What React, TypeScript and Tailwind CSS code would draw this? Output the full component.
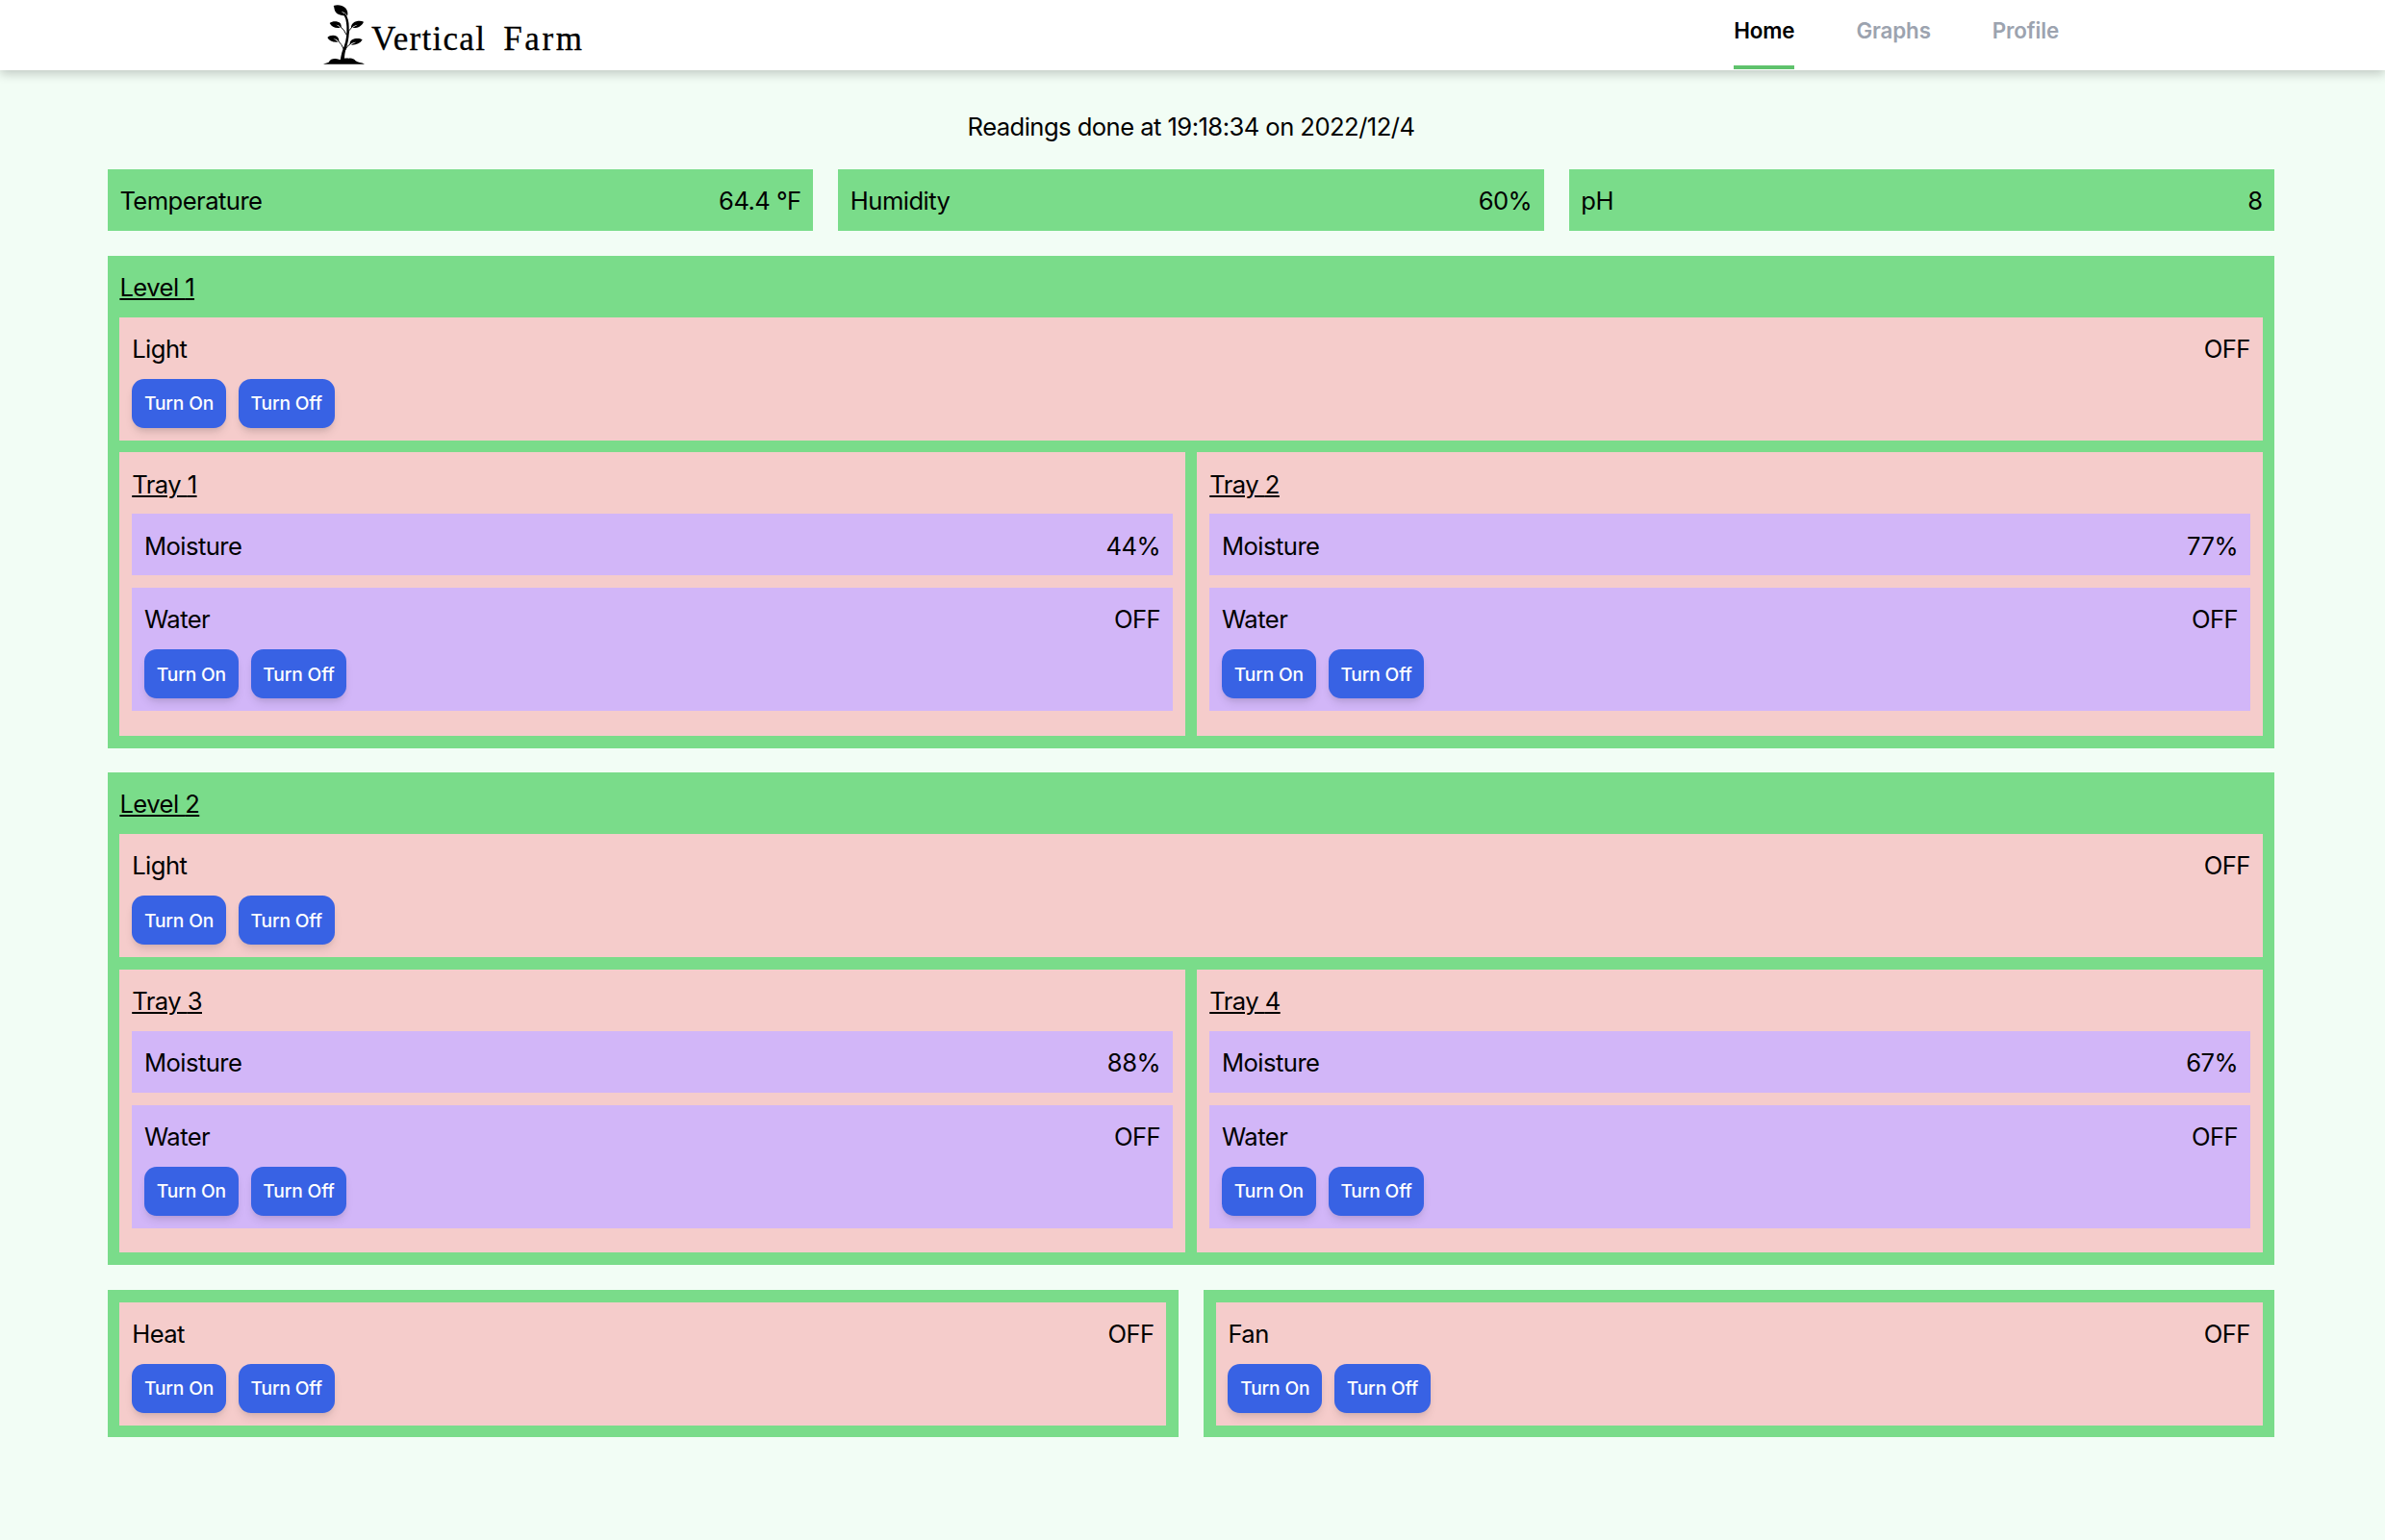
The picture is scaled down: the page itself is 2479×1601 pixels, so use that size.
import React from "react";

function Logo() {
  return (
    <svg className="mt-[5px] h-[62px] w-[43px] shrink-0" viewBox="48 15 129 186" fill="#000">
      <path d="M48 200 C52 197 60 197 65 194 C69 186 76 183 84 183 C92 182 97 187 104 186 C112 182 120 181 128 182 C138 181 144 184 149 190 C155 195 168 195 177 200 Z" />
      <path d="M101 188 C104 170 107 158 113 144 C120 125 122 106 121 82 C120 66 118 54 110 44 L116 42 C125 54 128 68 128 84 C129 106 128 124 121 146 C115 162 114 174 114 188 Z" />
      <path d="M80 18 C92 13 108 16 117 25 C123 32 126 40 123 50 C119 42 112 37 104 36 C110 40 115 43 118 48 C104 50 92 46 86 37 C82 31 83 24 80 18 Z" />
      <path d="M68 72 C76 65 90 65 98 70 C103 74 105 80 104 86 C99 80 94 77 87 77 C93 79 97 82 101 86 C88 90 74 84 68 72 Z" />
      <path d="M174 68 C166 64 150 65 142 71 C136 76 134 82 135 87 C141 82 147 78 155 77 C148 81 143 83 139 87 C154 89 168 82 174 68 Z" />
      <path d="M61 117 C68 109 82 108 90 113 C96 118 98 124 97 130 C92 124 86 121 79 120 C86 124 90 127 94 131 C80 133 66 128 61 117 Z" />
      <path d="M170 124 C162 118 146 119 138 124 C132 128 130 134 131 139 C137 134 144 131 151 131 C144 134 139 136 135 140 C150 141 163 136 170 124 Z" />
      <path d="M100 82 Q114 92 120 108 M138 84 Q126 94 124 110 M94 127 Q106 138 112 154 M134 136 Q120 144 114 160" fill="none" stroke="#000" strokeWidth="2.8" />
    </svg>
  );
}

function Nav() {
  return (
    <header className="flex h-[73px] shrink-0 justify-between bg-white pr-[339px] pl-[336px] shadow-[0_4px_10px_rgba(0,0,0,0.2)]">
      <div className="flex">
        <Logo />
        <span className="ml-[7px] pt-[20px] font-['Liberation_Serif',serif] text-[35px] leading-[42px] tracking-[1.3px] whitespace-nowrap text-black [-webkit-text-stroke:0.3px_#000]">
          Vertical <span className="ml-[8px] tracking-[2.6px]">Farm</span>
        </span>
      </div>
      <nav className="flex gap-[64px] text-[22.4px] leading-[32px] font-semibold tracking-[-0.15px] text-[#9ca3af]">
        <a className="h-[72px] border-b-4 border-[#5fc26c] pt-[16px] text-black">Home</a>
        <a className="pt-[16px]">Graphs</a>
        <a className="pt-[16px]">Profile</a>
      </nav>
    </header>
  );
}

function Row({ label, value }: { label: string; value: string }) {
  return (
    <div className="-mb-[1.4px] flex justify-between pt-[1.4px]">
      <span>{label}</span>
      <span>{value}</span>
    </div>
  );
}

function Button({ children }: { children: React.ReactNode }) {
  return (
    <button className="h-[51.2px] rounded-[12.8px] bg-[#3862e4] px-[12.8px] pt-[1px] text-[19.2px] leading-[25.6px] font-medium tracking-[-0.15px] whitespace-nowrap text-white shadow-[0_6.4px_9.6px_-1.6px_rgba(0,0,0,0.1),0_3.2px_6.4px_-3.2px_rgba(0,0,0,0.1)]">
      {children}
    </button>
  );
}

function Device({ label, color }: { label: string; color: string }) {
  return (
    <div className={`h-[128px] p-[12.8px] ${color}`}>
      <Row label={label} value="OFF" />
      <div className="flex gap-[12.8px] pt-[12.8px]">
        <Button>Turn On</Button>
        <Button>Turn Off</Button>
      </div>
    </div>
  );
}

function Tray({ id, moisture }: { id: number; moisture: string }) {
  return (
    <div className="flex h-[294.4px] flex-1 flex-col gap-[12.8px] bg-[#f5cccb] p-[12.8px]">
      <h3 className="-mb-[1.4px] pt-[1.4px] underline">Tray {id}</h3>
      <div className="bg-[#d2b6f8] p-[12.8px]">
        <Row label="Moisture" value={moisture} />
      </div>
      <Device label="Water" color="bg-[#d2b6f8]" />
    </div>
  );
}

function Level({ id, trays }: { id: number; trays: { id: number; moisture: string }[] }) {
  return (
    <section className="flex flex-col gap-[12.8px] bg-[#7adc8a] p-[12.8px]">
      <h2 className="-mb-[1.4px] pt-[1.4px] underline">Level {id}</h2>
      <Device label="Light" color="bg-[#f5cccb]" />
      <div className="flex gap-[12.8px]">
        {trays.map((t) => (
          <Tray key={t.id} {...t} />
        ))}
      </div>
    </section>
  );
}

export default function App() {
  return (
    <div className="flex h-[1601px] w-[2479px] flex-col bg-[#f2fdf5] font-['Inter',sans-serif] text-[25.6px] leading-[38.4px] tracking-[-0.55px] text-black">
      <Nav />
      <main className="flex flex-col gap-[25.6px] pt-[39.05px] pr-[114.6px] pl-[111.6px]">
        <p className="-mb-[1.4px] pt-[1.4px] text-center">Readings done at 19:18:34 on 2022/12/4</p>
        <div className="flex gap-[25.6px]">
          {[
            ["Temperature", "64.4 °F"],
            ["Humidity", "60%"],
            ["pH", "8"],
          ].map(([label, value]) => (
            <div key={label} className="flex-1 bg-[#7adc8a] p-[12.8px]">
              <Row label={label} value={value} />
            </div>
          ))}
        </div>
        <Level id={1} trays={[{ id: 1, moisture: "44%" }, { id: 2, moisture: "77%" }]} />
        <Level id={2} trays={[{ id: 3, moisture: "88%" }, { id: 4, moisture: "67%" }]} />
        <div className="flex gap-[25.6px]">
          {["Heat", "Fan"].map((name) => (
            <div key={name} className="flex-1 bg-[#7adc8a] p-[12.8px]">
              <Device label={name} color="bg-[#f5cccb]" />
            </div>
          ))}
        </div>
      </main>
    </div>
  );
}
